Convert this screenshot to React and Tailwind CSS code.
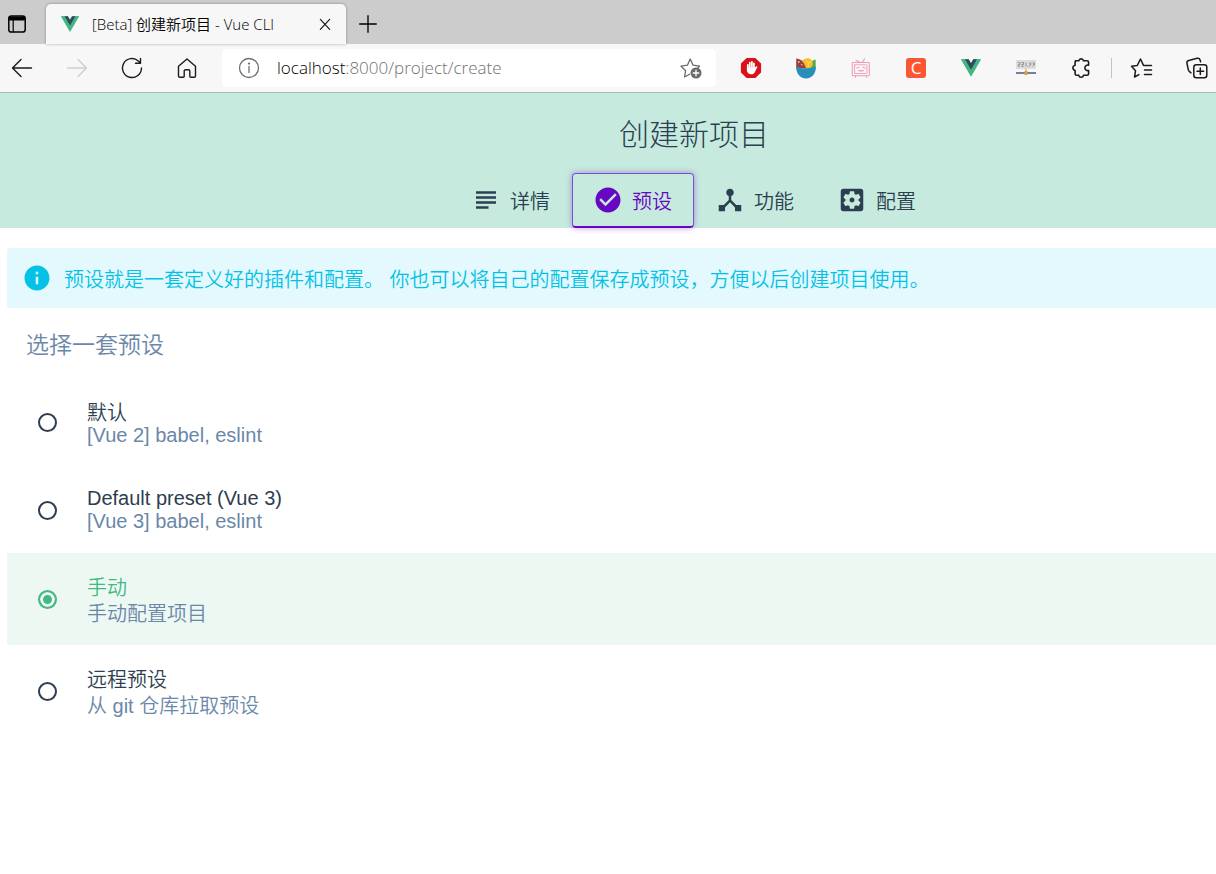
import { useState } from "react";
import { MdSubject, MdCheckCircle, MdDeviceHub, MdInfo } from "react-icons/md";

function VueLogo({ className }) {
  return (
    <svg viewBox="0 0 256 221" className={className} aria-hidden="true">
      <path fill="#41B883" d="M204.8 0H256L128 220.8 0 0h97.9L128 51.2 157.4 0z" />
      <path fill="#41B883" d="M0 0l128 220.8L256 0h-51.2L128 132.5 50.6 0z" />
      <path fill="#35495E" d="M50.6 0L128 133.1 204.8 0h-47.4L128 51.2 97.9 0z" />
    </svg>
  );
}

function Line({ children, size = "size-6", width = 1.4, color = "text-[#1b1b1b]" }) {
  return (
    <svg
      viewBox="0 0 24 24"
      className={`${size} ${color} shrink-0`}
      fill="none"
      stroke="currentColor"
      strokeWidth={width}
      strokeLinecap="round"
      strokeLinejoin="round"
      aria-hidden="true"
    >
      {children}
    </svg>
  );
}

function ToolButton({ label, disabled, children }) {
  return (
    <button
      type="button"
      aria-label={label}
      disabled={disabled}
      className="flex h-9 w-[38px] shrink-0 items-center justify-center rounded"
    >
      {children}
    </button>
  );
}

function TabStrip() {
  return (
    <div className="flex h-11 items-end bg-[#cccccc]">
      <button type="button" aria-label="标签页操作" className="flex h-10 w-[46px] items-center pl-[5px]">
        <Line width={1.5} color="text-black">
          <rect x="3.8" y="4" width="16.4" height="16" rx="2.6" />
          <path d="M4.4 5h15.2v3H4.4z" fill="currentColor" strokeWidth="1" />
          <path d="M8.2 8v12" strokeWidth="1.2" />
        </Line>
      </button>
      <div className="flex h-10 w-[300px] items-center rounded-t-[5px] bg-[#f7f7f7] pr-[13px] pl-[15px] shadow-[0_0_3px_rgba(0,0,0,0.35)]">
        <VueLogo className="h-4 w-[18px] shrink-0" />
        <span className="ml-[13px] flex-1 text-[15px] whitespace-nowrap text-black">
          [Beta] 创建新项目 - Vue CLI
        </span>
        <button type="button" aria-label="关闭标签页" className="flex size-4 items-center justify-center">
          <Line size="size-4" width={1.8}>
            <path d="M5 5l14 15M19 5L5 20" />
          </Line>
        </button>
      </div>
      <button type="button" aria-label="新建标签页" className="flex h-10 w-[43px] items-center justify-center">
        <Line size="size-5" width={1.6} color="text-black">
          <path d="M12 2v20M2 12h20" />
        </Line>
      </button>
    </div>
  );
}

function AdBlockIcon() {
  return (
    <svg viewBox="0 0 24 24" className="size-[22px]" aria-hidden="true">
      <path d="M7.2 1h9.6L23 7.2v9.6L16.8 23H7.2L1 16.800V7.2z" fill="#d8141b" />
      <path
        d="M8.5 8.5V15M10.7 6.2V14M13 5.4V14M15.2 7V14"
        stroke="#fff"
        strokeWidth="1.9"
        strokeLinecap="round"
      />
      <path
        d="M7.6 11.5h8.500l1.500-1.200c.9-.5 1.600.3 1.100 1.100l-2.700 5.600c-.8 1.300-1.900 1.900-3.500 1.900-3 0-4.900-1.600-4.900-4.600z"
        fill="#fff"
      />
    </svg>
  );
}

function BowlIcon() {
  return (
    <svg viewBox="0 0 24 24" className="size-6" aria-hidden="true">
      <path d="M2.2 12V2.600C6 3 9 5 11 8.500l1.500 4z" fill="#9c3f3a" />
      <path d="M21.600 12V3.500c-2.500.4-4.500 2-5 4l-1 5z" fill="#4fa84a" />
      <path d="M8.500 4.500C10 2.600 12.200 2 14.200 2.200c2.800.4 4.600 2.600 4.600 5.200 0 2-1 3.600-2.600 4.600h-4z" fill="#f6bd27" />
      <path d="M12 4.500l2.500 2.500 3-1.500M14.500 7l-.5 4" stroke="#fbe08a" fill="none" />
      <circle cx="4.800" cy="6" r=".9" fill="#f1b8a8" />
      <circle cx="7.800" cy="8.600" r=".9" fill="#e7a06a" />
      <path d="M2 10c3 2 6.500 2.600 10 2.300 3.500-.2 7-.8 10-1.800 0 7-4 12-10 12S2 17.500 2 10z" fill="#2a8fb8" />
    </svg>
  );
}

function TvIcon() {
  return (
    <Line size="size-[22px]" width={1.2} color="text-[#f29bb6]">
      <path d="M6.500 3.500l4 2M16 2l-2.500 3.500" />
      <rect x="2.500" y="6" width="18.500" height="14.500" rx="1" />
      <rect x="5" y="8.500" width="13.500" height="9.500" rx=".5" strokeWidth="1" />
      <path d="M7.500 12l2.500-.8M14 11.200l2.500.8M9.500 14.500c.8 1 1.700 1 2.500 0 .8 1 1.700 1 2.500 0M6 20.500V22M18 20.500V22" />
    </Line>
  );
}

function IpIcon() {
  return (
    <svg viewBox="0 0 22 20" className="h-5 w-[22px]" aria-hidden="true">
      <rect x="1" y="2" width="20" height="9" fill="#dcdcdc" />
      <path
        d="M3 4.500h2v2H3.500v2H5M6.500 4.500h2v2H7v2h1.500M11 4.500v4M13 8v.8M14.500 4.500l1.500 2.500M16 4.500l-1.500 4M18 4.500l1.500 2.500M19.500 4.500l-1.500 4"
        stroke="#8a8a8a"
        strokeWidth=".9"
        fill="none"
      />
      <path d="M11 11v4" stroke="#999" />
      <path d="M1 15h20" stroke="#7b7f94" strokeWidth="2" />
      <rect x="9.500" y="13" width="3" height="4" fill="#e3a03a" />
    </svg>
  );
}

function Toolbar() {
  return (
    <div className="flex h-[49px] items-center border-b border-[#a9bdb6] bg-[#f7f7f7] pl-[3px]">
      <div className="flex gap-[17px]">
        <ToolButton label="返回">
          <Line>
            <path d="M21.500 12H2.500M11 3.500L2.500 12l8.500 8.500" />
          </Line>
        </ToolButton>
        <ToolButton label="前进" disabled>
          <Line color="text-[#cfcfcf]">
            <path d="M2.500 12h19M13 3.500l8.500 8.500-8.500 8.500" />
          </Line>
        </ToolButton>
        <ToolButton label="刷新">
          <Line>
            <path d="M21.500 12a9.500 9.500 0 1 1-3.200-7.100l2 1.900M20.500 2.500v4.700h-5" />
          </Line>
        </ToolButton>
        <ToolButton label="主页">
          <Line>
            <path d="M3.500 10.200L12 3l8.500 7.200V20a1.300 1.300 0 0 1-1.300 1.300h-3.400a1 1 0 0 1-1-1V15a1.200 1.200 0 0 0-1.200-1.200h-3.200A1.200 1.200 0 0 0 9.200 15v5.300a1 1 0 0 1-1 1H4.800A1.300 1.300 0 0 1 3.500 20z" />
          </Line>
        </ToolButton>
      </div>
      <div className="mx-4 flex h-[38px] min-w-0 flex-1 items-center rounded-[5px] bg-white pr-[13px] pl-[15px]">
        <button type="button" aria-label="查看站点信息" className="shrink-0">
          <Line color="text-[#6f6f6f]" width={1.3}>
            <circle cx="12" cy="12" r="9.500" />
            <path d="M12 10.500v6" />
            <circle cx="12" cy="7.600" r=".5" fill="currentColor" />
          </Line>
        </button>
        <div className="ml-4 flex-1 truncate text-[17px] text-[#707070]">
          <span className="text-black">localhost</span>:8000/project/create
        </div>
        <button type="button" aria-label="将此页添加到收藏夹" className="shrink-0">
          <Line color="text-[#6a6a6a]" width={1.3}>
            <path d="M10.500 18.300L5.600 21l1-6.300L2 10.200l6.400-1L11.200 3l2.900 6.200 6.400 1-1.500 1.500" />
            <circle cx="17" cy="17" r="5.500" fill="currentColor" stroke="none" />
            <path d="M17 14.200v5.600M14.200 17h5.600" stroke="#fff" />
          </Line>
        </button>
      </div>
      <div className="flex gap-[17px]">
        <ToolButton label="广告拦截">
          <AdBlockIcon />
        </ToolButton>
        <ToolButton label="扩展：碗">
          <BowlIcon />
        </ToolButton>
        <ToolButton label="扩展：电视">
          <TvIcon />
        </ToolButton>
        <ToolButton label="扩展：C">
          <span className="flex size-5 items-center justify-center rounded-[3px] bg-[#fc5531] text-[17px] leading-5 font-medium text-white">
            C
          </span>
        </ToolButton>
        <ToolButton label="Vue 开发者工具">
          <VueLogo className="h-[18px] w-5" />
        </ToolButton>
        <ToolButton label="扩展：IP">
          <IpIcon />
        </ToolButton>
        <ToolButton label="扩展">
          <Line width={1.6}>
            <path d="M6.500 4.800h3.300a2.400 2.400 0 0 1 4.700 0H18a1.600 1.600 0 0 1 1.600 1.600v2.800a2.800 2.800 0 1 0 0 5.300v3.200a1.600 1.600 0 0 1-1.600 1.600h-3.500a2.400 2.400 0 0 1-4.700 0H7.700a1.600 1.600 0 0 1-1.600-1.600v-3.200a2.700 2.700 0 0 1 0-5.300V6a1.200 1.200 0 0 1 1.200-1.200" />
          </Line>
        </ToolButton>
      </div>
      <div className="mx-[11px] h-5 w-px bg-[#c4c4c4]" />
      <div className="flex gap-[17px]">
        <ToolButton label="收藏夹">
          <Line width={1.5}>
            <path d="M8.900 18.600L4.500 21l1-6.200L1.500 10.300l5.800-.9L10.500 3l3 6.400h8M14.500 14h7M14.500 18.500h7" />
          </Line>
        </ToolButton>
        <ToolButton label="集锦">
          <Line width={1.5}>
            <rect x="8.800" y="8.800" width="13" height="13" rx="2.500" />
            <path d="M15.300 12v6.600M12 15.300h6.600M6 16.800l-1.500-1.200a3 3 0 0 1-1.100-1.600L2 7.500a2.500 2.500 0 0 1 1.800-3l8.300-2.200a2.500 2.500 0 0 1 3 1.700l.5 1.800" />
          </Line>
        </ToolButton>
      </div>
    </div>
  );
}

function SettingsIcon({ className }) {
  return (
    <svg viewBox="0 0 24 24" className={className} fill="currentColor" aria-hidden="true">
      <path d="M12 10c-1.100 0-2 .9-2 2s.9 2 2 2 2-.9 2-2-.9-2-2-2zm7-7H5c-1.110 0-2 .9-2 2v14c0 1.100.89 2 2 2h14c1.110 0 2-.9 2-2V5c0-1.100-.89-2-2-2zm-1.750 9c0 .23-.02.46-.05.68l1.480 1.160c.13.11.17.3.08.45l-1.400 2.420c-.09.15-.27.21-.43.15l-1.740-.7c-.36.28-.76.51-1.180.69l-.26 1.850c-.03.17-.18.3-.35.3h-2.800c-.17 0-.32-.13-.35-.29l-.26-1.850c-.43-.18-.82-.41-1.180-.69l-1.740.7c-.16.06-.34 0-.43-.15l-1.400-2.420c-.09-.15-.05-.34.08-.45l1.480-1.160c-.03-.23-.05-.46-.05-.69 0-.23.02-.46.05-.68l-1.480-1.160c-.13-.11-.17-.3-.08-.45l1.400-2.420c.09-.15.27-.21.43-.15l1.740.7c.36-.28.76-.51 1.180-.69l.26-1.850c.03-.17.18-.3.35-.3h2.800c.17 0 .32.13.35.29l.26 1.850c.43.18.82.41 1.180.69l1.740-.7c.16-.06.34 0 .43.15l1.400 2.420c.09.15.05.34-.08.45l-1.480 1.160c.03.23.05.46.05.69z" />
    </svg>
  );
}

const STEPS = [
  { id: "details", label: "详情", Icon: MdSubject },
  { id: "presets", label: "预设", Icon: MdCheckCircle },
  { id: "features", label: "功能", Icon: MdDeviceHub },
  { id: "config", label: "配置", Icon: SettingsIcon },
];

const LATIN_LINE = "leading-[23px]";
const HAN_LINE = "pt-1 leading-[22px]";

const PRESETS = [
  { id: "default", name: "默认", info: "[Vue 2] babel, eslint", nameLine: HAN_LINE, infoLine: LATIN_LINE },
  { id: "vue3", name: "Default preset (Vue 3)", info: "[Vue 3] babel, eslint", nameLine: LATIN_LINE, infoLine: LATIN_LINE },
  { id: "manual", name: "手动", info: "手动配置项目", nameLine: HAN_LINE, infoLine: HAN_LINE },
  { id: "remote", name: "远程预设", info: "从 git 仓库拉取预设", nameLine: HAN_LINE, infoLine: HAN_LINE },
];

export default function App() {
  const [preset, setPreset] = useState("manual");

  return (
    <div lang="zh-CN" className="min-h-screen overflow-x-hidden bg-white font-[350]">
      <header className="font-['Open_Sans','Noto_Sans_CJK_SC',sans-serif]">
        <TabStrip />
        <Toolbar />
      </header>

      <main className="font-['Liberation_Sans','Noto_Sans_CJK_SC',sans-serif] text-[20px] text-[#2c3e50]">
        <div className="flex flex-col items-center bg-[#c6eade] pt-[22px] pl-[172px]">
          <h1 className="text-[30px] leading-10 font-light">创建新项目</h1>
          <nav className="mt-[18px] flex">
            {STEPS.map(({ id, label, Icon }) => (
              <button
                key={id}
                type="button"
                aria-current={id === "presets" ? "step" : undefined}
                className={
                  id === "presets"
                    ? "flex h-[55px] items-center gap-[9px] rounded-[4px] border border-b-2 border-[#7c4fd0] border-b-[#6806c1] pr-[21px] pl-5 text-[#6806c1] shadow-[0_0_6px_rgba(104,6,193,0.4)]"
                    : "flex h-[55px] items-center gap-[9px] rounded-[4px] border border-b-2 border-transparent pr-[21px] pl-5"
                }
              >
                <Icon className="size-[30px]" />
                <span className="pt-[3px]">{label}</span>
              </button>
            ))}
          </nav>
        </div>

        <div className="mt-5 ml-[7px]">
          <p className="flex min-h-[60px] items-center gap-3 rounded-l-[3px] bg-[#e4f9fd] px-[15px] text-[#03c2e6]">
            <MdInfo className="size-[30px] shrink-0" />
            <span className="pt-[3px]">
              预设就是一套定义好的插件和配置。 你也可以将自己的配置保存成预设，方便以后创建项目使用。
            </span>
          </p>

          <fieldset>
            <legend className="px-[19px] pt-[21px] pb-[17px] text-[23px] leading-8 text-[#6b87a8]">
              选择一套预设
            </legend>
            {PRESETS.map((p) => (
              <label
                key={p.id}
                className={
                  p.id === preset
                    ? "flex cursor-pointer items-center gap-[30px] bg-[#edf8f3] py-5 pl-[31px]"
                    : "flex cursor-pointer items-center gap-[30px] py-5 pl-[31px]"
                }
              >
                <input
                  type="radio"
                  name="preset"
                  value={p.id}
                  checked={p.id === preset}
                  onChange={() => setPreset(p.id)}
                  className="size-[19px] shrink-0 appearance-none rounded-full border-2 border-[#2c3e50] checked:border-[#42b983] checked:bg-[#42b983] checked:shadow-[inset_0_0_0_3px_#edf8f3]"
                />
                <span className="flex flex-col">
                  <span className={`${p.nameLine} ${p.id === preset ? "text-[#42b983]" : ""}`}>{p.name}</span>
                  <span className={`${p.infoLine} text-[#6b87a8]`}>{p.info}</span>
                </span>
              </label>
            ))}
          </fieldset>
        </div>
      </main>
    </div>
  );
}
